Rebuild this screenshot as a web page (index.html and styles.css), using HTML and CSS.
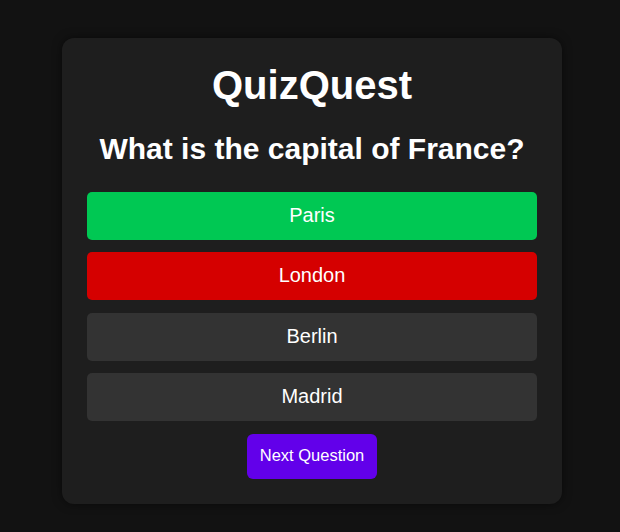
FILE: index.html
```html
<!DOCTYPE html>
<html lang="en">
<head>
<meta charset="utf-8">
<title>QuizQuest</title>
<link rel="stylesheet" href="styles.css">
</head>
<body>
  <div class="card">
    <h1 class="title">QuizQuest</h1>
    <h2 class="question">What is the capital of France?</h2>
    <div class="answers">
      <button class="answer correct">Paris</button>
      <button class="answer wrong">London</button>
      <button class="answer">Berlin</button>
      <button class="answer">Madrid</button>
    </div>
    <button class="next">Next Question</button>
  </div>
</body>
</html>
```

FILE: styles.css
```css
html, body {
  margin: 0;
  height: 100%;
}
body {
  background: #121212;
  font-family: "Liberation Sans", Arial, sans-serif;
  color: #fff;
  display: flex;
  justify-content: center;
  align-items: flex-start;
  padding: 38px 0 0 4px;
  box-sizing: border-box;
}
.card {
  width: 500px;
  box-sizing: border-box;
  background: #1e1e1e;
  border-radius: 12px;
  padding: 24px 25px 25px;
  box-shadow: 0 0 10px rgba(0, 0, 0, 0.5);
  display: flex;
  flex-direction: column;
  align-items: center;
}
.title {
  margin: 0;
  font-size: 40px;
  font-weight: bold;
  line-height: 46px;
}
.question {
  margin: 23px 0 26px;
  font-size: 30px;
  font-weight: bold;
  line-height: 35px;
}
.answers {
  width: 100%;
  display: flex;
  flex-direction: column;
  gap: 12.3px;
}
.answer {
  width: 100%;
  height: 48px;
  border: 0;
  border-radius: 5px;
  background: #333333;
  color: #fff;
  font-family: inherit;
  font-size: 20px;
  padding: 0 0 1px;
}
.answer.correct { background: #00c853; }
.answer.wrong { background: #d50000; }
.next {
  margin-top: 13px;
  height: 45px;
  padding: 0 13px 1px;
  border: 0;
  border-radius: 6px;
  background: #6200ea;
  color: #fff;
  font-family: inherit;
  font-size: 16.5px;
}
```
